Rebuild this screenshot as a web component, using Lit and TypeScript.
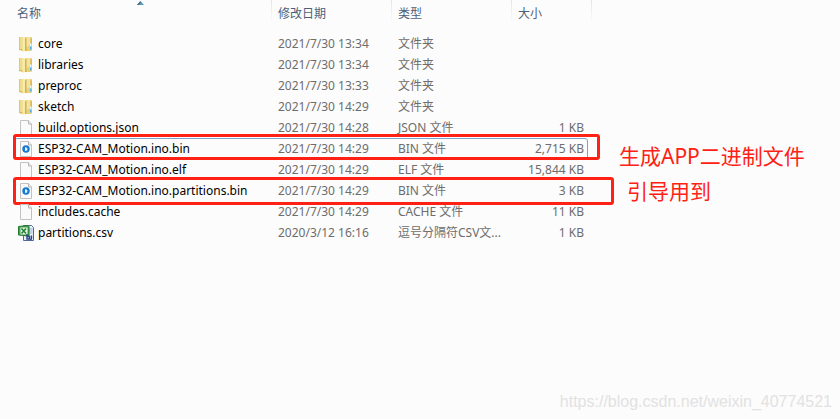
import { LitElement, html, css, svg, nothing } from "lit";
import { customElement, property } from "lit/decorators.js";
import { classMap } from "lit/directives/class-map.js";

type Kind = "folder" | "file" | "bin" | "csv";

interface Entry {
  kind: Kind;
  name: string;
  date: string;
  type: string;
  size: string;
  focused?: boolean;
  mark?: "short" | "long";
}

const entries: Entry[] = [
  { kind: "folder", name: "core", date: "2021/7/30 13:34", type: "文件夹", size: "" },
  { kind: "folder", name: "libraries", date: "2021/7/30 13:34", type: "文件夹", size: "" },
  { kind: "folder", name: "preproc", date: "2021/7/30 13:33", type: "文件夹", size: "" },
  { kind: "folder", name: "sketch", date: "2021/7/30 14:29", type: "文件夹", size: "" },
  { kind: "file", name: "build.options.json", date: "2021/7/30 14:28", type: "JSON 文件", size: "1 KB" },
  { kind: "bin", name: "ESP32-CAM_Motion.ino.bin", date: "2021/7/30 14:29", type: "BIN 文件", size: "2,715 KB", focused: true, mark: "short" },
  { kind: "file", name: "ESP32-CAM_Motion.ino.elf", date: "2021/7/30 14:29", type: "ELF 文件", size: "15,844 KB" },
  { kind: "bin", name: "ESP32-CAM_Motion.ino.partitions.bin", date: "2021/7/30 14:29", type: "BIN 文件", size: "3 KB", mark: "long" },
  { kind: "file", name: "includes.cache", date: "2021/7/30 14:29", type: "CACHE 文件", size: "11 KB" },
  { kind: "csv", name: "partitions.csv", date: "2020/3/12 16:16", type: "逗号分隔符CSV文...", size: "1 KB" },
];

const page = svg`
  <path d="M2.5 .5h8l3 3.5v11.500h-11z" fill="#fafafa" stroke="#c2c2c2"/>
  <path d="M10.500 .5v3.500h3" fill="#eee" stroke="#b4b4b4"/>`;

const drawings = {
  folder: svg`
    <path d="M1 1h4.500v14L1 14z" fill="#f0dc8e"/>
    <path d="M1 1h1v13H1z" fill="#e2c76e"/>
    <path d="M1 13h5v2l-5-1z" fill="#d9bd5b"/>
    <path d="M7 1h6q1 0 1 1v12l-1 1H7z" fill="#ead07a"/>
    <path d="M7 1h5v8L7 12z" fill="#f3e3a0"/>
    <path d="M8.500 1v14H5l1-11z" fill="#d4b24c"/>
    <path d="M4.500 2L7 1v14l-2.500 1z" fill="#f8eba8"/>
    <path d="M12.500 2.500h1.500v11.500h-1.500z" fill="#d9b958"/>
    <path d="M12 7.500h1.500v6H12z" fill="#e9f6fa"/>
    <path d="M12 10.500h1.500v3H12z" fill="#4aaee0"/>`,
  file: page,
  bin: svg`${page}
    <circle cx="8" cy="8" r="3.700" fill="#1679cf"/>
    <path d="M7 6l2.400 1-.2 2.600L7 10z" fill="#e8f4ff"/>`,
  csv: svg`
    <path d="M5.500 .5h8l2 2v13h-10z" fill="#e9eff8" stroke="#50699d"/>
    <path d="M11 4h3.500M11 6h3.500M11 8h3.500" stroke="#9db0d1"/>
    <path d="M.5 1.500l9-1 1.500 1v9.500l-10.500-1z" fill="#3fa548" stroke="#25762e"/>
    <path d="M2.500 2.500h7v7h-7z" fill="#edf8e8"/>
    <path d="M3.500 3.500l4.500 5M8 3.500L3.500 8.500" stroke="#28823a" stroke-width="1.700"/>
    <path d="M9 9v5h2.500v-2.500H9M13.500 10.500v3l-1 1.500" fill="none" stroke="#2b4688" stroke-width="1.400"/>`,
};

@customElement("file-icon")
export class FileIcon extends LitElement {
  @property() kind: Kind = "file";

  static styles = css`
    :host { display: block; width: 16px; height: 16px; flex: none; }
    svg { display: block; }
  `;

  render() {
    return html`<svg width="16" height="16" viewBox="0 0 16 16" aria-hidden="true">${drawings[this.kind]}</svg>`;
  }
}

@customElement("app-root")
export class AppRoot extends LitElement {
  static styles = css`
    :host {
      display: block;
      position: relative;
      min-height: 100vh;
      background: #fcfcfc;
      color: #6d6d6d;
      font: 12px/21px "Noto Sans", "Noto Sans CJK SC", sans-serif;
    }
    .listing {
      width: 592px;
      table-layout: fixed;
      border-collapse: separate;
      border-spacing: 0;
    }
    .name-col { width: 272px; }
    .mid-col { width: 120px; }
    .size-col { width: 80px; }
    th {
      position: relative;
      height: 24px;
      padding: 0;
      font-weight: 400;
      text-align: left;
      background: linear-gradient(#dde7f2, #fcfcfc) right / 1px 100% no-repeat;
    }
    .sort {
      display: block;
      width: 100%;
      padding: 3px 0 0 6px;
      border: 0;
      background: none;
      color: #4c607a;
      font: inherit;
      text-align: left;
    }
    .first { padding-left: 17px; }
    .arrow { position: absolute; top: 1px; left: 50%; display: block; }
    .spacer td { height: 9px; }
    td { height: 21px; padding: 0 0 0 6px; white-space: nowrap; }
    .name { padding-left: 18px; }
    .label { display: flex; align-items: center; gap: 4px; color: #000; }
    .size { padding: 0 8px 0 0; text-align: right; }
    .row { position: relative; }
    .focus-ring {
      position: absolute;
      inset: 0 4px -1px 14px;
      border: 1px solid #7da2ce;
      border-radius: 3px;
    }
    .mark {
      position: absolute;
      top: -4px;
      bottom: -1px;
      left: 13px;
      right: -8px;
      border: 3px solid #ff2113;
      border-radius: 3px;
    }
    .long { top: -3px; bottom: -4px; right: -22px; }
    .notes {
      position: absolute;
      top: 139px;
      left: 619px;
      color: #ff2113;
      font-size: 21px;
      line-height: 35px;
      white-space: nowrap;
    }
    .notes p { margin: 0; }
    .indent { padding-left: 8px; }
    .watermark {
      position: absolute;
      right: 8px;
      bottom: 7px;
      color: #e2e2e2;
      font: 16px/20px "Liberation Sans", sans-serif;
      text-decoration: none;
    }
  `;

  render() {
    return html`
      <table class="listing">
        <colgroup>
          <col class="name-col" /><col class="mid-col" /><col class="mid-col" /><col class="size-col" />
        </colgroup>
        <thead>
          <tr>
            <th aria-sort="ascending">
              <button class="sort first">名称</button>
              <svg class="arrow" width="9" height="4" viewBox="0 0 9 4" aria-hidden="true">
                <path d="M1 4l3.500-4L8 4z" fill="#5d9bb8" />
                <path d="M1 4l3.500-4v1.500L3 4z" fill="#3b6780" />
              </svg>
            </th>
            <th><button class="sort">修改日期</button></th>
            <th><button class="sort">类型</button></th>
            <th><button class="sort">大小</button></th>
          </tr>
        </thead>
        <tbody>
          <tr class="spacer" aria-hidden="true"><td colspan="4"></td></tr>
          ${entries.map((e) => html`
            <tr class="row">
              <td class="name">
                <span class="label"><file-icon .kind=${e.kind}></file-icon>${e.name}</span>
                ${e.focused ? html`<span class="focus-ring"></span>` : nothing}
                ${e.mark ? html`<span class=${classMap({ mark: true, long: e.mark === "long" })}></span>` : nothing}
              </td>
              <td>${e.date}</td>
              <td>${e.type}</td>
              <td class="size">${e.size}</td>
            </tr>`)}
        </tbody>
      </table>
      <div class="notes">
        <p>生成APP二进制文件</p>
        <p class="indent">引导用到</p>
      </div>
      <a class="watermark" href="https://blog.csdn.net/weixin_40774521">https://blog.csdn.net/weixin_40774521</a>
    `;
  }
}
